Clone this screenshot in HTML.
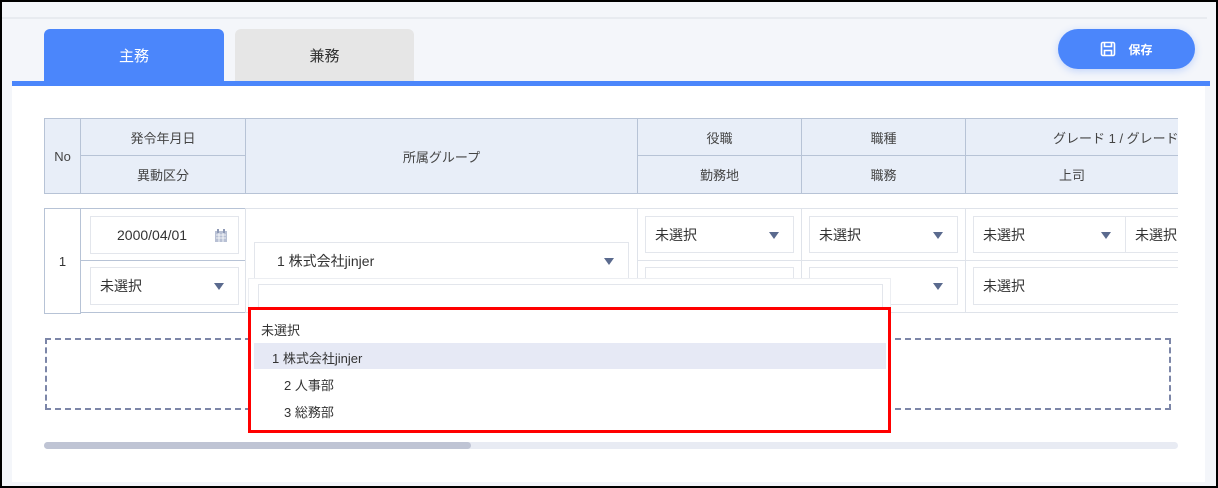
<!DOCTYPE html>
<html><head><meta charset="utf-8"><style>
*{box-sizing:border-box;margin:0;padding:0}
body{width:1218px;height:488px;background:#000;position:relative;overflow:hidden;font-family:"Liberation Sans","Noto Sans CJK JP",sans-serif;font-size:13px;color:#333}
.a{position:absolute}
.frame{left:2px;top:2px;width:1214px;height:484px;background:#f4f6fa}
.panel{left:12px;top:86px;width:1193px;height:396px;background:#fff}
.hd{background:#e8eef8;border:1px solid #b7c3d6;display:flex;align-items:center;justify-content:center;color:#444;font-size:13px}
.sel{background:#fff;border:1px solid #e3e6ec;display:flex;align-items:center;padding-left:9px;font-size:14px;color:#333}
.tri{position:absolute;right:14px;top:50%;margin-top:-3px;width:0;height:0;border-left:5px solid transparent;border-right:5px solid transparent;border-top:7px solid #5a6a8e}
.cell{border:1px solid #dfe3ea;background:#fff}
</style></head><body>
<div class="a frame"></div>
<div class="a" style="left:2px;top:17px;width:1205px;height:2px;background:#e8ebf0"></div>
<div class="a" style="left:44px;top:29px;width:180px;height:53px;background:#4b86fb;border-radius:6px 6px 0 0;color:#fff;font-size:15px;display:flex;align-items:center;justify-content:center">主務</div>
<div class="a" style="left:235px;top:29px;width:179px;height:53px;background:#e6e6e6;border-radius:6px 6px 0 0;color:#333;font-size:15px;display:flex;align-items:center;justify-content:center">兼務</div>
<div class="a" style="left:1058px;top:29px;width:137px;height:40px;background:#4b86fb;border-radius:20px;box-shadow:0 2px 8px rgba(75,134,251,.3);color:#fff;font-size:12px;font-weight:bold;display:flex;align-items:center;justify-content:center;gap:12px">
<svg width="16" height="16" viewBox="0 0 16 16" fill="none" stroke="#fff" stroke-width="1.6"><rect x="1.5" y="1.5" width="13" height="13" rx="1.5"/><path d="M4.5 1.5v4h7v-4M4.5 14.5v-5h7v5"/></svg>保存</div>
<div class="a panel"></div>
<div class="a" style="left:12px;top:81px;width:1198px;height:5px;background:#4b86fb"></div>
<!-- header -->
<div class="a hd" style="left:44px;top:118px;width:37px;height:76px">No</div>
<div class="a hd" style="left:80px;top:118px;width:166px;height:38px">発令年月日</div>
<div class="a hd" style="left:80px;top:155px;width:166px;height:39px">異動区分</div>
<div class="a hd" style="left:245px;top:118px;width:393px;height:76px">所属グループ</div>
<div class="a hd" style="left:637px;top:118px;width:165px;height:38px">役職</div>
<div class="a hd" style="left:637px;top:155px;width:165px;height:39px">勤務地</div>
<div class="a hd" style="left:801px;top:118px;width:165px;height:38px">職種</div>
<div class="a hd" style="left:801px;top:155px;width:165px;height:39px">職務</div>
<div class="a hd" style="left:965px;top:118px;width:213px;height:38px;justify-content:flex-start;padding-left:87px;border-right:none;overflow:hidden;white-space:nowrap">グレード 1 / グレード</div>
<div class="a hd" style="left:965px;top:155px;width:213px;height:39px;border-right:none">上司</div>
<!-- body -->
<div class="a cell" style="left:44px;top:208px;width:37px;height:106px;border-color:#b7c3d6;display:flex;align-items:center;justify-content:center">1</div>
<div class="a cell" style="left:80px;top:208px;width:166px;height:53px;border-color:#b7c3d6"></div>
<div class="a cell" style="left:80px;top:260px;width:166px;height:53px;border-color:#b7c3d6"></div>
<div class="a cell" style="left:245px;top:208px;width:393px;height:105px"></div>
<div class="a cell" style="left:637px;top:208px;width:165px;height:53px"></div>
<div class="a cell" style="left:637px;top:260px;width:165px;height:53px"></div>
<div class="a cell" style="left:801px;top:208px;width:165px;height:53px"></div>
<div class="a cell" style="left:801px;top:260px;width:165px;height:53px"></div>
<div class="a cell" style="left:965px;top:208px;width:213px;height:53px;border-right:none"></div>
<div class="a cell" style="left:965px;top:260px;width:213px;height:53px;border-right:none"></div>
<div class="a sel" style="left:90px;top:216px;width:149px;height:38px;padding-left:26px">2000/04/01
<svg class="a" style="right:10px;top:11px" width="14" height="15" viewBox="0 0 14 15"><rect x="1" y="3" width="12" height="11" fill="#b8c0d4"/><rect x="3" y="1" width="2" height="4" fill="#8e99b5"/><rect x="9" y="1" width="2" height="4" fill="#8e99b5"/><path d="M2 7h10M2 10h10M5 5v9M9 5v9" stroke="#fff" stroke-width=".8"/></svg></div>
<div class="a sel" style="left:90px;top:267px;width:149px;height:38px">未選択<span class="tri"></span></div>
<div class="a sel" style="left:254px;top:242px;width:375px;height:37px;padding-left:22px">1 株式会社jinjer<span class="tri"></span></div>
<div class="a sel" style="left:645px;top:216px;width:149px;height:37px">未選択<span class="tri"></span></div>
<div class="a sel" style="left:645px;top:267px;width:149px;height:38px"></div>
<div class="a sel" style="left:809px;top:216px;width:149px;height:37px">未選択<span class="tri"></span></div>
<div class="a sel" style="left:809px;top:267px;width:149px;height:38px"><span class="tri"></span></div>
<div class="a sel" style="left:973px;top:216px;width:153px;height:37px">未選択<span class="tri"></span></div>
<div class="a sel" style="left:1125px;top:216px;width:53px;height:37px;border-right:none;overflow:hidden;white-space:nowrap">未選択</div>
<div class="a sel" style="left:973px;top:267px;width:205px;height:38px;border-right:none">未選択</div>
<!-- dropdown search -->
<div class="a" style="left:248px;top:278px;width:643px;height:32px;background:#fff;border:1px solid #eceef2"></div>
<div class="a" style="left:258px;top:284px;width:625px;height:26px;background:#fff;border:1px solid #e3e6ec"></div>
<!-- dashed -->
<div class="a" style="left:45px;top:338px;width:1126px;height:72px;border:2px dashed #7c86a8"></div>
<!-- dropdown list -->
<div class="a" style="left:248px;top:307px;width:643px;height:126px;background:#fff;border:3px solid #f00"></div>
<div class="a" style="left:261px;top:320px;font-size:13px;color:#333">未選択</div>
<div class="a" style="left:254px;top:343px;width:632px;height:26px;background:#e6e9f5"></div>
<div class="a" style="left:272px;top:348px;font-size:13px;color:#333">1 株式会社jinjer</div>
<div class="a" style="left:284px;top:375px;font-size:13px;color:#333">2 人事部</div>
<div class="a" style="left:284px;top:402px;font-size:13px;color:#333">3 総務部</div>
<!-- scrollbar -->
<div class="a" style="left:44px;top:442px;width:1134px;height:7px;background:#e8ebf3;border-radius:4px"></div>
<div class="a" style="left:44px;top:442px;width:427px;height:7px;background:#bfc4d4;border-radius:4px"></div>
</body></html>
